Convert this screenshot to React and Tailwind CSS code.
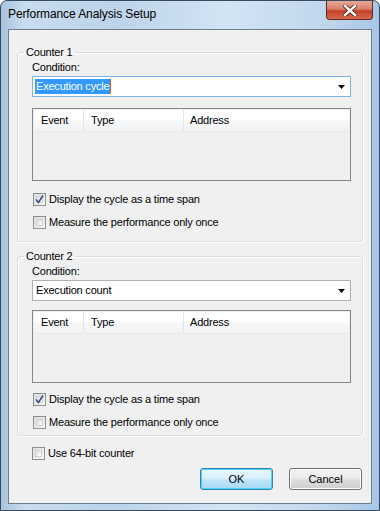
import React from 'react';

const font = { fontFamily: '"Liberation Sans", Arial, sans-serif' };

function CheckBox({ checked, label }) {
  return (
    <div className="flex items-center h-[13px]">
      <div className="w-[13px] h-[13px] border border-[#8e8f8f] bg-[linear-gradient(135deg,#dcdcdc,#f6f6f6)] p-[2px] shrink-0">
        <div className="w-full h-full border border-[#d0d0d0] bg-[linear-gradient(135deg,#e0e0e0,#fafafa)] flex items-center justify-center">
          {checked && (
            <svg width="9" height="9" viewBox="0 0 9 9" className="overflow-visible">
              <path d="M1 4.5 L3.5 7.5 L8 0.5" fill="none" stroke="#3a4f8d" strokeWidth="1.6" />
            </svg>
          )}
        </div>
      </div>
      <span className="ml-[3px] text-[11px] leading-[13px] tracking-[-0.2px] text-black">{label}</span>
    </div>
  );
}

function Combo({ value, focused }) {
  return (
    <div
      className={
        'h-[21px] flex items-center bg-white border ' +
        (focused ? 'border-[#7eb4ea]' : 'border-[#acb2ba]')
      }
    >
      <div className="flex-1 flex items-center pl-[2px] tracking-[-0.2px]">
        {focused ? (
          <span className="bg-[#3399ff] text-white text-[11px] leading-[15px] px-[1px] border-r border-[#d46a00]">{value}</span>
        ) : (
          <span className="text-[11px] leading-[15px] px-[1px] text-black">{value}</span>
        )}
      </div>
      <div className="w-[17px] h-full flex items-center justify-center">
        <svg width="7" height="4" viewBox="0 0 7 4">
          <path d="M0 0 H7 L3.5 4 Z" fill="#000" />
        </svg>
      </div>
    </div>
  );
}

function ListView() {
  return (
    <div className="h-[73px] border border-[#828790] bg-[#f0f0f0] p-[1px]">
      <div className="h-[22px] flex bg-[linear-gradient(#ffffff_0%,#ffffff_45%,#f6f7f8_55%,#f1f2f4_100%)] border-b border-[#e6e8ec] text-[11px] tracking-[-0.2px] text-black">
        <div className="w-[50px] border-r border-[#e3e5e8] pl-[7px] flex items-center">Event</div>
        <div className="w-[100px] border-r border-[#e3e5e8] pl-[7px] flex items-center">Type</div>
        <div className="flex-1 pl-[6px] flex items-center">Address</div>
      </div>
    </div>
  );
}

function Group({ title, value, focused, listGap, checkGap, className }) {
  return (
    <fieldset className={'border border-[#d5dfe5] rounded-[3px] shadow-[inset_1px_1px_0_#fff,1px_1px_0_#fff] pl-[14px] pr-[11px] ' + className}>
      <legend className="-ml-[8px] px-[2px] text-[11px] leading-[13px] tracking-[-0.2px] text-black">{title}</legend>
      <div className="pt-[2px] text-[11px] leading-[13px] tracking-[-0.2px] text-black">Condition:</div>
      <div className="mt-[2px]">
        <Combo value={value} focused={focused} />
      </div>
      <div className={listGap}>
        <ListView />
      </div>
      <div className={'pl-[1px] flex flex-col gap-[10px] ' + checkGap}>
        <CheckBox checked label="Display the cycle as a time span" />
        <CheckBox label="Measure the performance only once" />
      </div>
    </fieldset>
  );
}

export default function App() {
  return (
    <div
      className="w-[380px] h-[511px] relative rounded-t-[7px] border border-[#3b4a5a] bg-[linear-gradient(90deg,#a9c3de_0%,#c8dcef_6%,#bcd3ea_30%,#d3e4f4_60%,#c1d7ed_85%,#a8c7e6_100%)] overflow-hidden"
      style={font}
    >
      {/* title */}
      <div className="h-[28px] pl-[7px] pt-[6px] text-[12px] leading-[15px] tracking-[-0.1px] text-black">
        Performance Analysis Setup
      </div>
      <div className="absolute right-[6px] top-0 w-[47px] h-[19px] rounded-b-[4px] border border-t-0 border-[#6b2a20] bg-[linear-gradient(#e8a797_0%,#d8806b_45%,#c2412a_55%,#d56a4f_100%)] flex items-center justify-center">
        <svg width="14" height="11" viewBox="0 0 14 11">
          <path d="M2 1 L12 10 M12 1 L2 10" stroke="#5b2318" strokeWidth="4.2" strokeLinecap="square" />
          <path d="M2 1 L12 10 M12 1 L2 10" stroke="#ffffff" strokeWidth="2.4" strokeLinecap="square" />
        </svg>
      </div>

      {/* client area */}
      <div className="mx-[7px] h-[475px] border border-[#6d7e8e] bg-[#f0f0f0] px-[8px] pt-[16px]">
        <Group
          title="Counter 1"
          value="Execution cycle"
          focused
          listGap="mt-[11px]"
          checkGap="mt-[12px]"
          className="pb-[12px]"
        />
        <Group
          title="Counter 2"
          value="Execution count"
          listGap="mt-[9px]"
          checkGap="mt-[10px]"
          className="mt-[8px] pb-[6px]"
        />
        <div className="mt-[11px] pl-[15px]">
          <CheckBox label="Use 64-bit counter" />
        </div>
        <div className="mt-[8px] flex justify-end gap-[16px] pr-[1px]">
          <button className="w-[73px] h-[22px] rounded-[3px] border border-[#3c7fb1] shadow-[inset_0_0_0_1px_#48d7fb] bg-[linear-gradient(#eaf6fd_0%,#d9f0fc_45%,#bee6fd_55%,#a7d9f5_100%)] text-[11px] text-black">
            OK
          </button>
          <button className="w-[73px] h-[22px] rounded-[3px] border border-[#707070] shadow-[inset_0_0_0_1px_#fcfcfc] bg-[linear-gradient(#f2f2f2_0%,#ebebeb_45%,#dddddd_55%,#cfcfcf_100%)] text-[11px] text-black">
            Cancel
          </button>
        </div>
      </div>
    </div>
  );
}
